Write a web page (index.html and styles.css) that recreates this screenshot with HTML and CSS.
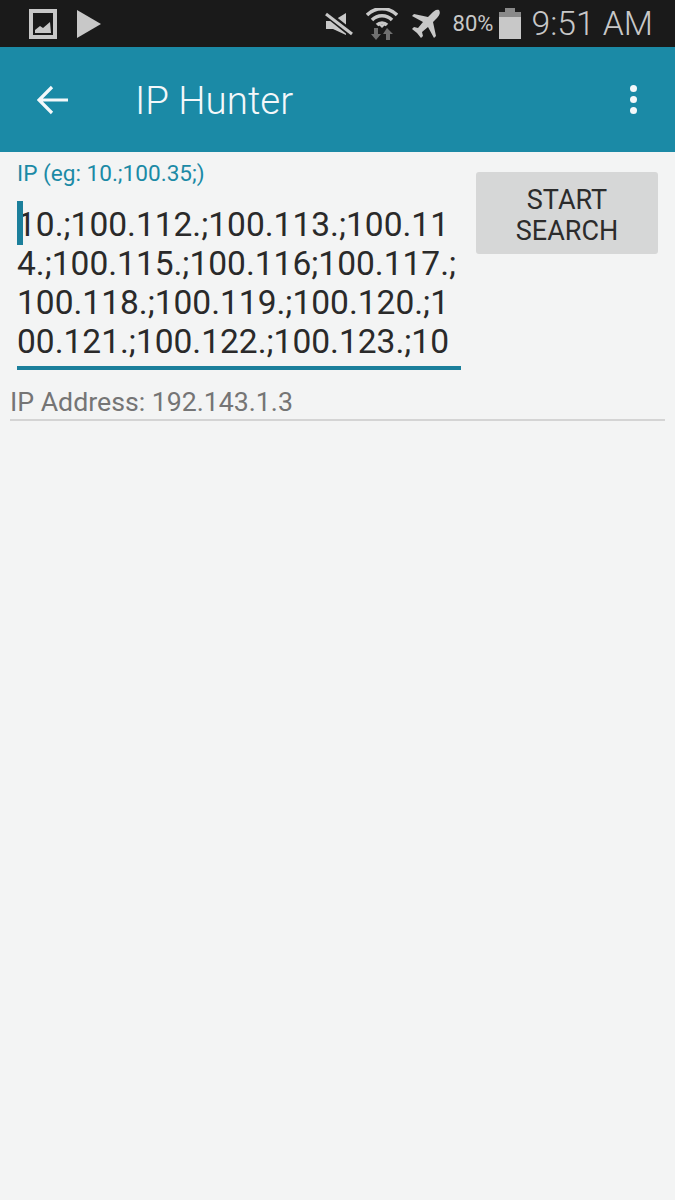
FILE: index.html
```html
<!DOCTYPE html>
<html lang="en">
<head>
    <meta charset="UTF-8">
    <title>IP Hunter</title>
    <link rel="stylesheet" href="styles.css">
</head>
<body>

<div class="status-bar">
    <div class="status-left">
        <svg class="icon-gallery" width="28" height="30" viewBox="0 0 28 30">
            <rect x="2" y="2" width="24" height="26" fill="none" stroke="#c8c8c8" stroke-width="4"/>
            <path d="M6 24 L6 21 L11 17 L14 19 L21 13 L22 24 Z" fill="#c8c8c8"/>
        </svg>
        <svg class="icon-play" width="26" height="30" viewBox="0 0 26 30">
            <path d="M1 1 L25 15 L1 29 Z" fill="#c8c8c8"/>
        </svg>
    </div>
    <div class="status-right">
        <svg class="icon-mute" width="28" height="24" viewBox="0 0 28 24">
            <path d="M1 9 L8 9 L21 1 L21 23 L8 17 L1 17 Z" fill="#c8c8c8"/>
            <path d="M1 1 L27 22" stroke="#1a1a1a" stroke-width="7"/>
            <path d="M1 2 L27 22" stroke="#c8c8c8" stroke-width="3"/>
        </svg>
        <svg class="icon-wifi" width="32" height="32" viewBox="0 0 32 32">
            <path d="M1 7 A21 21 0 0 1 31 7" fill="none" stroke="#c8c8c8" stroke-width="3.5"/>
            <path d="M6 12 A14 14 0 0 1 26 12" fill="none" stroke="#c8c8c8" stroke-width="3.5"/>
            <path d="M11 17 A7 7 0 0 1 21 17" fill="none" stroke="#c8c8c8" stroke-width="3.5"/>
            <path d="M13 17 L19 17 L16 20 Z" fill="#c8c8c8"/>
            <path d="M8 20 h4 v6 h3 l-5 6 l-5 -6 h3 Z" fill="#707070"/>
            <path d="M21 20 l6 6 h-3 v6 h-4 v-6 h-3 Z" fill="#707070"/>
        </svg>
        <svg class="icon-plane" width="30" height="30" viewBox="0 0 30 30">
            <path d="M28 1 C25 0 23 2 20 5 L17 8 L3 5 L1 7 L12 13 L7 19 L3 18 L1 20 L6 24 L10 29 L12 27 L11 23 L17 18 L23 29 L25 27 L22 13 L25 10 C28 7 30 4 28 1 Z" fill="#c8c8c8"/>
        </svg>
        <span class="battery-pct">80%</span>
        <svg class="icon-battery" width="22" height="31" viewBox="0 0 22 31">
            <rect x="6" y="0" width="10" height="4" fill="#8a8a8a"/>
            <rect x="0" y="4" width="22" height="6" fill="#8a8a8a"/>
            <rect x="0" y="9" width="22" height="22" fill="#c8c8c8"/>
        </svg>
        <span class="clock">9:51 AM</span>
    </div>
</div>

<div class="app-bar">
    <svg class="back-arrow" width="32" height="30" viewBox="0 0 32 30">
        <path d="M31 15 L3 15 M15 2 L2 15 L15 28" fill="none" stroke="#f4f8fa" stroke-width="3.2"/>
    </svg>
    <div class="app-title">IP Hunter</div>
    <div class="overflow-menu">
        <span class="dot"></span>
        <span class="dot"></span>
        <span class="dot"></span>
    </div>
</div>

<div class="content">
    <div class="search-row">
        <div class="ip-field">
            <div class="ip-label">IP (eg: 10.;100.35;)</div>
            <div class="ip-input">
                <span class="cursor"></span>
                <div>10.;100.112.;100.113.;100.11</div>
                <div>4.;100.115.;100.116;100.117.;</div>
                <div>100.118.;100.119.;100.120.;1</div>
                <div>00.121.;100.122.;100.123.;10</div>
            </div>
        </div>
        <button class="search-btn">START<br>SEARCH</button>
    </div>
    <div class="ip-address">IP Address: 192.143.1.3</div>
</div>

</body>
</html>
```

FILE: styles.css
```css
html, body {
    margin: 0;
    height: 100%;
}
body {
    width: 675px;
    height: 1200px;
    overflow: hidden;
    background: #f3f4f4;
    font-family: Roboto, "Liberation Sans", sans-serif;
}
.status-bar {
    display: flex;
    justify-content: space-between;
    align-items: center;
    height: 47px;
    background: #1a1a1a;
}
.status-left {
    display: flex;
    align-items: center;
    gap: 19px;
    margin-left: 29px;
}
.status-right {
    display: flex;
    align-items: center;
    margin-right: 22px;
    color: #c8c8c8;
}
.icon-wifi {
    margin-left: 13px;
}
.icon-plane {
    margin-left: 13px;
}
.battery-pct {
    margin-left: 12px;
    font-size: 22px;
}
.icon-battery {
    margin-left: 6px;
}
.clock {
    margin-left: 10px;
    font-size: 33.7px;
    font-weight: 300;
}
.app-bar {
    display: flex;
    align-items: center;
    height: 105px;
    background: #1b8aa6;
}
.back-arrow {
    margin-left: 37px;
}
.app-title {
    margin-left: 66px;
    padding-top: 2px;
    color: #f4f8fa;
    font-size: 38.5px;
    font-weight: 300;
}
.overflow-menu {
    display: flex;
    flex-direction: column;
    gap: 4px;
    margin-left: auto;
    margin-right: 38px;
}
.dot {
    width: 7px;
    height: 7px;
    border-radius: 50%;
    background: #f4f8fa;
}
.content {
    padding: 0 10px;
}
.search-row {
    display: flex;
    align-items: flex-start;
}
.ip-field {
    width: 444px;
    margin-left: 7px;
}
.ip-label {
    margin-top: 10px;
    color: #1b8aa6;
    font-size: 22.6px;
    line-height: 24px;
}
.ip-input {
    position: relative;
    margin-top: 19px;
    padding-bottom: 5px;
    border-bottom: 4px solid #1b7f9b;
    color: #2a2a2a;
    font-size: 33.5px;
    line-height: 39px;
    white-space: nowrap;
}
.cursor {
    position: absolute;
    left: 0;
    top: -4px;
    width: 6px;
    height: 44px;
    background: #1b7f9b;
}
.search-btn {
    width: 182px;
    height: 82px;
    margin: 20px 0 0 15px;
    padding: 6px 0 0;
    border: none;
    border-radius: 3px;
    background: #d6d7d7;
    color: #2c2c2c;
    font-family: inherit;
    font-size: 27px;
    line-height: 31px;
}
.ip-address {
    margin-top: 17px;
    padding-bottom: 2px;
    border-bottom: 2px solid #d4d4d4;
    color: #757575;
    font-size: 26.7px;
    line-height: 30px;
}
```
